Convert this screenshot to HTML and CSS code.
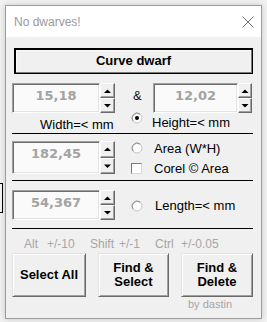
FILE: index.html
```html
<!DOCTYPE html>
<html>
<head>
<meta charset="utf-8">
<link rel="stylesheet" href="styles.css">
</head>
<body>
<div class="stray"></div>
<div class="window">
  <div class="titlebar">
    <span class="title">No dwarves!</span>
    <svg class="close" width="12" height="12" viewBox="0 0 12 12"><path d="M0.5 0.5 L11.5 11.5 M11.5 0.5 L0.5 11.5" stroke="#707070" stroke-width="1" fill="none"/></svg>
  </div>
  <div class="content">
    <div class="btn default">Curve dwarf</div>

    <div class="row1">
      <div class="spin">
        <div class="field">15,18</div>
        <div class="arrows">
          <div class="arr"><svg width="13" height="13" viewBox="0 0 13 13"><path d="M3 9 L10 9 L6.5 5.5 Z" fill="#000"/></svg></div>
          <div class="arr"><svg width="13" height="13" viewBox="0 0 13 13"><path d="M3 5 L10 5 L6.5 8.5 Z" fill="#000"/></svg></div>
        </div>
      </div>
      <div class="amp">&amp;</div>
      <div class="spin narrow">
        <div class="field">12,02</div>
        <div class="arrows">
          <div class="arr"><svg width="12" height="13" viewBox="0 0 12 13"><path d="M2.5 9 L9.5 9 L6 5.5 Z" fill="#000"/></svg></div>
          <div class="arr"><svg width="12" height="13" viewBox="0 0 12 13"><path d="M2.5 5 L9.5 5 L6 8.5 Z" fill="#000"/></svg></div>
        </div>
      </div>
    </div>

    <div class="labels">
      <span class="lbl-w">Width=&lt; mm</span>
      <svg class="radio-top" width="12" height="12" viewBox="0 0 12 12"><circle cx="6" cy="6" r="5" fill="#fff" stroke="#c4c4c4"/><path d="M2.2 9.2 A5 5 0 0 1 9.2 2.2" stroke="#8a8a8a" fill="none"/><circle cx="6" cy="6" r="2" fill="#000"/></svg>
      <span class="lbl-h">Height=&lt; mm</span>
    </div>

    <div class="sep"></div>

    <div class="row2">
      <div class="spin fixed">
        <div class="field">182,45</div>
        <div class="arrows">
          <div class="arr"><svg width="13" height="14" viewBox="0 0 13 14"><path d="M3 9 L10 9 L6.5 5.5 Z" fill="#000"/></svg></div>
          <div class="arr"><svg width="13" height="14" viewBox="0 0 13 14"><path d="M3 5.5 L10 5.5 L6.5 9 Z" fill="#000"/></svg></div>
        </div>
      </div>
      <div class="opts">
        <div class="opt">
          <svg width="12" height="12" viewBox="0 0 12 12"><circle cx="6" cy="6" r="5" fill="#fff" stroke="#c4c4c4"/><path d="M2.2 9.2 A5 5 0 0 1 9.2 2.2" stroke="#8a8a8a" fill="none"/></svg>
          <span>Area (W*H)</span>
        </div>
        <div class="opt">
          <span class="check"></span>
          <span>Corel © Area</span>
        </div>
      </div>
    </div>

    <div class="sep sep2"></div>

    <div class="row3">
      <div class="spin fixed">
        <div class="field">54,367</div>
        <div class="arrows">
          <div class="arr"><svg width="13" height="13" viewBox="0 0 13 13"><path d="M3 9 L10 9 L6.5 5.5 Z" fill="#000"/></svg></div>
          <div class="arr"><svg width="13" height="13" viewBox="0 0 13 13"><path d="M3 5 L10 5 L6.5 8.5 Z" fill="#000"/></svg></div>
        </div>
      </div>
      <div class="opt len">
        <svg width="12" height="12" viewBox="0 0 12 12"><circle cx="6" cy="6" r="5" fill="#fff" stroke="#c4c4c4"/><path d="M2.2 9.2 A5 5 0 0 1 9.2 2.2" stroke="#8a8a8a" fill="none"/></svg>
        <span>Length=&lt; mm</span>
      </div>
    </div>

    <div class="sep sep3"></div>

    <div class="hint">
      <span class="h1">Alt</span><span class="h2">+/-10</span><span class="h3">Shift</span><span class="h4">+/-1</span><span class="h5">Ctrl</span><span>+/-0.05</span>
    </div>

    <div class="actions">
      <div class="btn big">Select All</div>
      <div class="btn big">Find &amp;<br>Select</div>
      <div class="btn big">Find &amp;<br>Delete</div>
    </div>

    <div class="by">by dastin</div>
  </div>
</div>
</body>
</html>
```
FILE: styles.css
```css
html, body {
  margin: 0;
  padding: 0;
}
body {
  background: #f2f2f2;
  font-family: "Liberation Sans", Arial, sans-serif;
  position: relative;
  width: 267px;
  height: 322px;
  overflow: hidden;
}
.stray {
  position: absolute;
  left: -10px;
  top: 183px;
  width: 11px;
  height: 28px;
  border: 1px solid #000;
  background: #f0f0f0;
}
.window {
  margin: 5px 0 0 5px;
  width: 257px;
  height: 314px;
  box-sizing: border-box;
  border: 1px solid #9c9c9c;
  background: #f0f0f0;
  box-shadow: 0 0 6px rgba(0,0,0,0.18);
  display: flex;
  flex-direction: column;
}
.titlebar {
  height: 31px;
  background: #fff;
  display: flex;
  align-items: center;
  justify-content: space-between;
  padding: 1px 8px 0 8px;
  box-sizing: border-box;
}
.title {
  font-size: 12px;
  color: #9a9a9a;
}
.close {
  display: block;
  margin-right: -1px;
}
.content {
  flex: 1;
  padding: 0 8px 0 6px;
  display: flex;
  flex-direction: column;
}
.btn {
  background: #f0f0f0;
  font-weight: bold;
  font-size: 13px;
  color: #000;
  display: flex;
  align-items: center;
  justify-content: center;
  text-align: center;
  box-sizing: border-box;
  line-height: 14px;
}
.default {
  margin: 11px 0 0 2px;
  height: 26px;
  border: 1px solid #000;
  box-shadow: inset 1px 1px 0 #000, inset -1px -1px 0 #7a7a7a, inset 2px 2px 0 #fafafa;
  padding-bottom: 1px;
}
.big {
  height: 44px;
  border: 1px solid;
  border-color: #e3e3e3 #696969 #696969 #e3e3e3;
  box-shadow: inset 1px 1px 0 #fff, inset -1px -1px 0 #a0a0a0;
}
.row1 {
  margin-top: 9px;
  height: 30px;
  display: grid;
  grid-template-columns: 103px 38px 99px;
}
.spin {
  display: flex;
  height: 100%;
}
.spin.fixed {
  width: 103px;
}
.field {
  flex: 1;
  box-sizing: border-box;
  border: 1px solid;
  border-color: #a0a0a0 #fff #fff #a0a0a0;
  box-shadow: inset 1px 1px 0 #6d6d6d, inset -1px -1px 0 #e3e3e3;
  background: #fafafa;
  font-family: "DejaVu Sans", Verdana, sans-serif;
  font-weight: bold;
  font-size: 13px;
  line-height: 15px;
  color: #a3a3a3;
  text-align: center;
  padding-top: 4px;
}
.arrows {
  width: 15px;
  display: flex;
  flex-direction: column;
}
.narrow .arrows {
  width: 14px;
}
.arr {
  flex: 1;
  box-sizing: border-box;
  border: 1px solid;
  border-color: #fff #696969 #696969 #fff;
  box-shadow: inset -1px -1px 0 #a0a0a0;
  background: #f0f0f0;
  display: flex;
}
.arr svg {
  display: block;
}
.amp {
  font-size: 13px;
  padding: 5px 0 0 18px;
  color: #111;
}
.labels {
  height: 20px;
  display: grid;
  grid-template-columns: 28px 91px 21px 1fr;
  font-size: 13px;
  line-height: 15px;
  color: #000;
}
.lbl-w {
  grid-column: 2;
  padding-top: 4px;
  white-space: nowrap;
}
.radio-top {
  grid-column: 3;
  display: block;
  margin-top: -1px;
}
.lbl-h {
  grid-column: 4;
  padding-top: 2px;
  white-space: nowrap;
}
.sep {
  height: 1px;
  background: #000;
  flex: none;
}
.row2 {
  margin-top: 7px;
  height: 31px;
  display: grid;
  grid-template-columns: 119px 1fr;
}
.opts {
  display: flex;
  flex-direction: column;
  gap: 8px;
  padding-top: 1px;
}
.opt {
  display: flex;
  align-items: center;
  gap: 11px;
  height: 12px;
  font-size: 13px;
  color: #000;
  white-space: nowrap;
}
.opt svg {
  display: block;
  flex: none;
}
.check {
  width: 11px;
  height: 11px;
  box-sizing: border-box;
  border: 1px solid;
  border-color: #7a7a7a #d8d8d8 #d8d8d8 #7a7a7a;
  background: #fff;
  flex: none;
  margin-right: 1px;
}
.sep2 {
  margin-top: 8px;
}
.row3 {
  margin-top: 9px;
  height: 30px;
  display: grid;
  grid-template-columns: 119px 1fr;
  align-items: center;
}
.len {
  height: 14px;
  gap: 12px;
  padding-top: 1px;
}
.sep3 {
  margin-top: 8px;
}
.hint {
  margin-top: 8px;
  line-height: 14px;
  height: 14px;
  font-size: 12px;
  color: #a6a6a6;
  padding-left: 12px;
  white-space: nowrap;
}
.hint span {
  display: inline-block;
}
.h1 { width: 23px; }
.h2 { width: 43px; }
.h3 { width: 29px; }
.h4 { width: 36px; }
.h5 { width: 26px; }
.actions {
  margin-top: 2px;
  display: grid;
  grid-template-columns: 74px 71px 72px;
  justify-content: space-between;
}
.by {
  margin-top: 1px;
  font-size: 11px;
  line-height: 13px;
  color: #a6a6a6;
  padding-left: 176px;
}
```
